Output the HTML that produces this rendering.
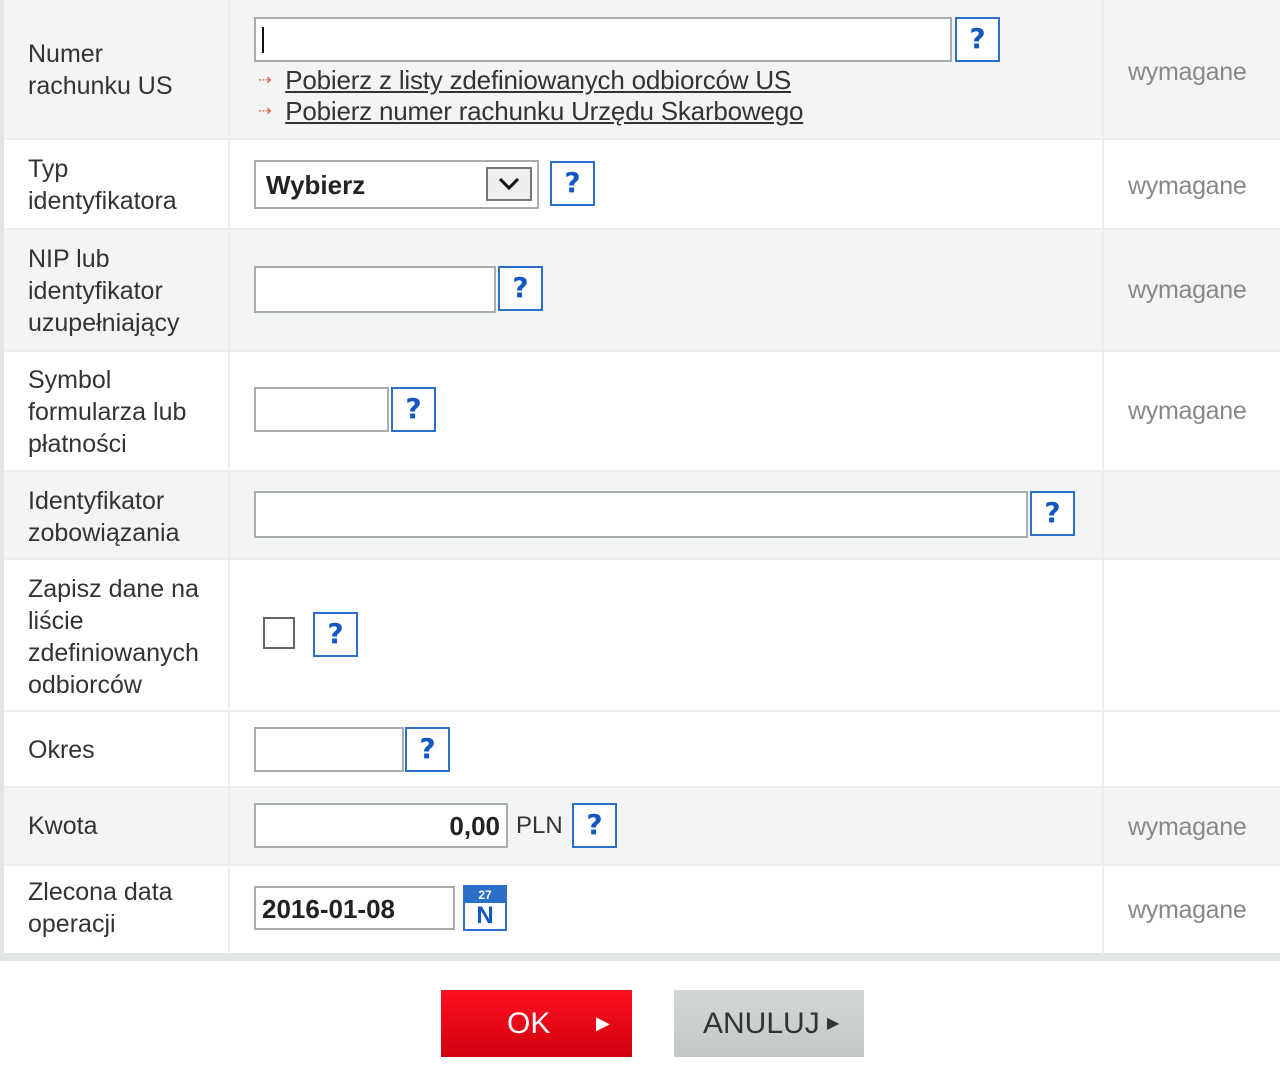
<!DOCTYPE html>
<html><head><meta charset="utf-8"><style>
*{margin:0;padding:0;box-sizing:border-box}
body{width:1280px;height:1073px;background:#fff;font-family:"Liberation Sans","DejaVu Sans",sans-serif;color:#333;position:relative;overflow:hidden}
.row{position:absolute;left:4px;width:1276px;border-bottom:2px solid #eceeee}
.g{background:#f3f5f5}
.vl{position:absolute;top:0;width:2px;height:955px;background:#eceeee}
.lab{position:absolute;left:28px;font-size:25px;line-height:32px;color:#333}
.req{position:absolute;left:1128px;font-size:25px;color:#888;letter-spacing:-0.3px}
.inp{position:absolute;background:#fff;border:2px solid #a7aeab}
.q{position:absolute;width:45px;height:45px;border:2px solid #2a6fc9;background:#fff;color:#1257c4;font-weight:bold;font-size:28px;text-align:center;line-height:40px;font-family:"DejaVu Sans",sans-serif}
a{color:#333;text-decoration:underline}
.lk{position:absolute;left:258px;font-size:26px;letter-spacing:-0.2px}
.lk span{color:#e0674a;font-size:16px;margin-right:14px;vertical-align:4px}
</style></head><body>
<div class="row g" style="top:0;height:140px"></div>
<div class="row" style="top:140px;height:90px"></div>
<div class="row g" style="top:230px;height:122px"></div>
<div class="row" style="top:352px;height:120px"></div>
<div class="row g" style="top:472px;height:88px"></div>
<div class="row" style="top:560px;height:152px"></div>
<div class="row" style="top:712px;height:76px"></div>
<div class="row g" style="top:788px;height:78px"></div>
<div class="row" style="top:866px;height:89px"></div>
<div style="position:absolute;left:0;top:0;width:4px;height:958px;background:#e2e5e5"></div>
<div style="position:absolute;left:0;top:953px;width:1280px;height:8px;background:#e2e5e5"></div>
<div class="vl" style="left:228px"></div>
<div class="vl" style="left:1102px"></div>

<div class="lab" style="top:38px">Numer<br>rachunku US</div>
<div class="inp" style="left:254px;top:17px;width:698px;height:45px"><div style="position:absolute;left:6px;top:8px;width:2px;height:26px;background:#111"></div></div>
<div class="q" style="left:955px;top:17px">?</div>
<div class="lk" style="top:65px"><span>⇢</span><a>Pobierz z listy zdefiniowanych odbiorców US</a></div>
<div class="lk" style="top:96px"><span>⇢</span><a>Pobierz numer rachunku Urzędu Skarbowego</a></div>
<div class="req" style="top:58px">wymagane</div>

<div class="lab" style="top:153px">Typ<br>identyfikatora</div>
<div class="inp" style="left:254px;top:160px;width:285px;height:49px;font-weight:bold;font-size:26px;padding:8px 10px;color:#222">Wybierz
<div style="position:absolute;right:5px;top:5px;width:46px;height:34px;border:2px solid #777;background:#eee;text-align:center"><svg width="24" height="20" viewBox="0 0 24 20"><path d="M3 6l9 9 9-9" fill="none" stroke="#111" stroke-width="3"/></svg></div></div>
<div class="q" style="left:550px;top:161px">?</div>
<div class="req" style="top:172px">wymagane</div>

<div class="lab" style="top:243px">NIP lub<br>identyfikator<br>uzupełniający</div>
<div class="inp" style="left:254px;top:266px;width:242px;height:47px"></div>
<div class="q" style="left:498px;top:266px">?</div>
<div class="req" style="top:276px">wymagane</div>

<div class="lab" style="top:364px">Symbol<br>formularza lub<br>płatności</div>
<div class="inp" style="left:254px;top:387px;width:135px;height:45px"></div>
<div class="q" style="left:391px;top:387px">?</div>
<div class="req" style="top:397px">wymagane</div>

<div class="lab" style="top:485px">Identyfikator<br>zobowiązania</div>
<div class="inp" style="left:254px;top:491px;width:774px;height:47px"></div>
<div class="q" style="left:1030px;top:491px">?</div>

<div class="lab" style="top:573px">Zapisz dane na<br>liście<br>zdefiniowanych<br>odbiorców</div>
<div style="position:absolute;left:263px;top:617px;width:32px;height:32px;border:2px solid #666;background:#fff"></div>
<div class="q" style="left:313px;top:612px">?</div>

<div class="lab" style="top:734px">Okres</div>
<div class="inp" style="left:254px;top:727px;width:150px;height:45px"></div>
<div class="q" style="left:405px;top:727px">?</div>

<div class="lab" style="top:810px">Kwota</div>
<div class="inp" style="left:254px;top:803px;width:254px;height:45px;text-align:right;font-weight:bold;font-size:26px;padding:6px 6px;color:#222">0,00</div>
<div style="position:absolute;left:516px;top:812px;font-size:24px">PLN</div>
<div class="q" style="left:572px;top:803px">?</div>
<div class="req" style="top:813px">wymagane</div>

<div class="lab" style="top:876px">Zlecona data<br>operacji</div>
<div class="inp" style="left:254px;top:886px;width:201px;height:44px;font-weight:bold;font-size:26px;padding:6px 6px;color:#222">2016-01-08</div>
<div style="position:absolute;left:463px;top:885px;width:44px;height:46px;border:2px solid #2a6fc9;background:#fff">
<div style="height:16px;background:#2a6fc9;color:#fff;font-size:12px;text-align:center;line-height:16px;font-weight:bold">27</div>
<div style="color:#1257c4;font-weight:bold;font-size:24px;text-align:center;line-height:26px">N</div></div>
<div class="req" style="top:896px">wymagane</div>

<div style="position:absolute;left:441px;top:990px;width:191px;height:67px;background:linear-gradient(#ff1020,#d00010);color:#fff;font-size:30px;line-height:67px"><span style="position:absolute;left:66px">OK</span><span style="position:absolute;left:155px;font-size:18px">▶</span></div>
<div style="position:absolute;left:674px;top:990px;width:190px;height:67px;background:linear-gradient(#d3d8d7,#c2c8c7);color:#333;font-size:30px;line-height:67px"><span style="position:absolute;left:29px">ANULUJ</span><span style="position:absolute;left:153px;font-size:16px">▶</span></div>
</body></html>
